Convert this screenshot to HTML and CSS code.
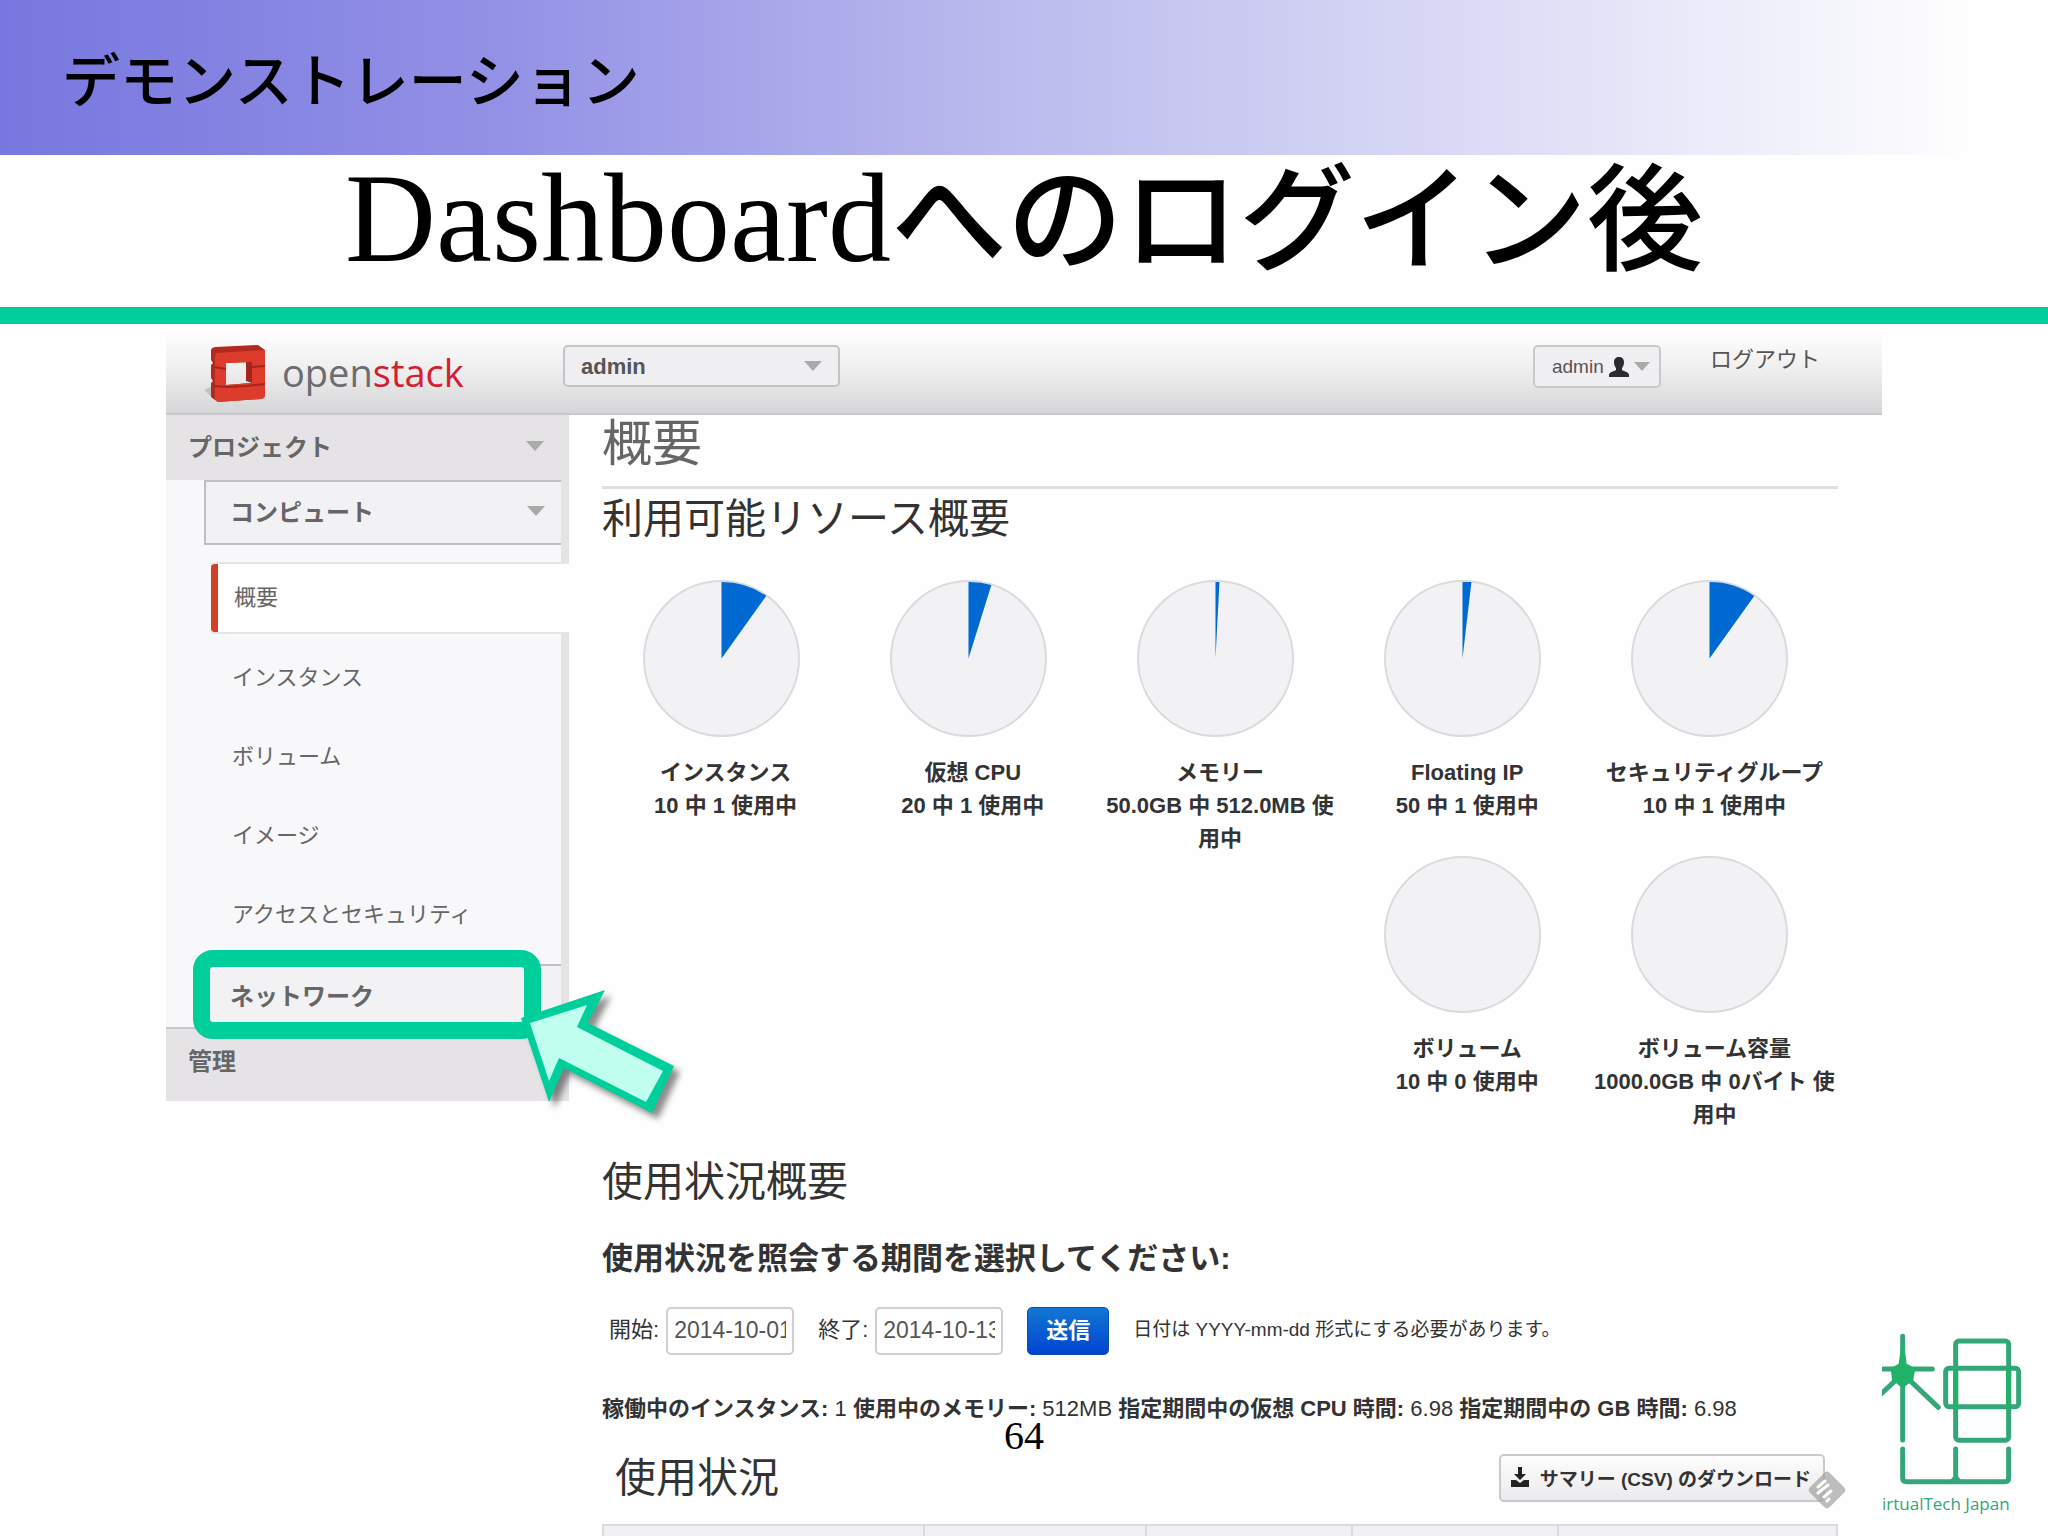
FILE: index.html
```html
<!DOCTYPE html>
<html lang="ja">
<head>
<meta charset="utf-8">
<title>Dashboardへのログイン後</title>
<link rel="stylesheet" href="styles.css">
</head>
<body>
<div class="slide">
  <header class="section-band">デモンストレーション</header>
  <h1 class="slide-title">Dashboard<span class="slide-title-ja">へのログイン後</span></h1>

  <div class="dashboard">
    <div class="topbar">
      <a class="brand" href="#">
        <svg class="brand-cube" viewBox="0 0 62 60" aria-hidden="true">
          <path d="M0 45 L8 41 L12 56 Z" fill="#c4c2c3"/>
          <path d="M7 5 Q8 2 12 2 L54 0 L61 5 V15 L58 17 L61 20 V51 Q60 54 56 54 L14 57 L7 52 V38 L9 36 L7 33 V20 L9 18 L7 15 Z M22 18 V40 L47 38 V17 Z" fill="#b02a20" fill-rule="evenodd"/>
          <path d="M12 8 L61 5 V51 Q60 54 56 54 L14 57 Q11 56 11 52 V12 Z M22 18 V40 L47 38 V17 Z" fill="#dd3b2b" fill-rule="evenodd"/>
          <path d="M42 17 L48 17 V38 L42 36 Z" fill="#a3261d"/>
          <path d="M10 22 L22 24 M48 22 L61 21 M10 41 L24 42 L42 41 L61 39" fill="none" stroke="#a3261d" stroke-width="2"/>
        </svg>
        <span class="brand-name">open<span class="brand-red">stack</span></span>
      </a>
      <div class="project-picker">
        <select class="project-select" aria-label="プロジェクト"><option>admin</option></select>
        <span class="caret"></span>
      </div>
      <button class="user-button" type="button">admin
        <svg class="user-icon" viewBox="0 0 20 22" aria-hidden="true"><path d="M10 1c3 0 5 2 5 5 0 3-1 5-2 6v2c1 1 7 2 7 5v2H0v-2c0-3 6-4 7-5v-2C6 11 5 9 5 6c0-3 2-5 5-5z" fill="#2c2c2e"/></svg>
        <span class="caret caret-small"></span>
      </button>
      <a class="logout" href="#">ログアウト</a>
    </div>

    <div class="columns">
      <nav class="sidebar">
        <a class="nav-head" href="#">プロジェクト<span class="caret"></span></a>
        <div class="nav-body">
          <a class="nav-sub" href="#">コンピュート<span class="caret"></span></a>
          <ul class="nav-list">
            <li><a class="nav-item nav-item-active" href="#">概要</a></li>
            <li><a class="nav-item" href="#">インスタンス</a></li>
            <li><a class="nav-item" href="#">ボリューム</a></li>
            <li><a class="nav-item" href="#">イメージ</a></li>
            <li><a class="nav-item" href="#">アクセスとセキュリティ</a></li>
          </ul>
          <div class="nav-marked">
            <a class="nav-sub nav-sub-plain" href="#">ネットワーク</a>
            <span class="marker"></span>
            <svg class="pointer" viewBox="515 980 180 150" aria-hidden="true">
              <path d="M521 1019 L605 991 L588 1024 L674 1067 L652 1114 L564 1069 L549 1103 Z" fill="#00cf9c"/>
              <path d="M530 1024 L587 1006 L577 1028 L663 1072 L646 1103 L559 1059 L549 1082 Z" fill="#c0fff0"/>
            </svg>
          </div>
        </div>
        <a class="nav-head nav-head-admin" href="#">管理</a>
      </nav>

      <main class="content">
        <h2 class="page-title">概要</h2>
        <h3 class="section-title">利用可能リソース概要</h3>
        <div class="quota-grid">
          <figure class="quota">
            <svg class="pie" viewBox="0 0 158 158" aria-hidden="true"><circle cx="79" cy="79" r="78"/><path d="M79 79V2A77 77 0 0 1 124 16Z"/></svg>
            <figcaption>インスタンス<br>10 中 1 使用中</figcaption>
          </figure>
          <figure class="quota">
            <svg class="pie" viewBox="0 0 158 158" aria-hidden="true"><circle cx="79" cy="79" r="78"/><path d="M79 79V2A77 77 0 0 1 102 5Z"/></svg>
            <figcaption>仮想 CPU<br>20 中 1 使用中</figcaption>
          </figure>
          <figure class="quota">
            <svg class="pie" viewBox="0 0 158 158" aria-hidden="true"><circle cx="79" cy="79" r="78"/><path d="M79 79V2H83Z"/></svg>
            <figcaption>メモリー<br>50.0GB 中 512.0MB 使<br>用中</figcaption>
          </figure>
          <figure class="quota">
            <svg class="pie" viewBox="0 0 158 158" aria-hidden="true"><circle cx="79" cy="79" r="78"/><path d="M79 79V2H88Z"/></svg>
            <figcaption>Floating IP<br>50 中 1 使用中</figcaption>
          </figure>
          <figure class="quota">
            <svg class="pie" viewBox="0 0 158 158" aria-hidden="true"><circle cx="79" cy="79" r="78"/><path d="M79 79V2A77 77 0 0 1 124 16Z"/></svg>
            <figcaption>セキュリティグループ<br>10 中 1 使用中</figcaption>
          </figure>
          <figure class="quota quota-volumes">
            <svg class="pie" viewBox="0 0 158 158" aria-hidden="true"><circle cx="79" cy="79" r="78"/></svg>
            <figcaption>ボリューム<br>10 中 0 使用中</figcaption>
          </figure>
          <figure class="quota">
            <svg class="pie" viewBox="0 0 158 158" aria-hidden="true"><circle cx="79" cy="79" r="78"/></svg>
            <figcaption>ボリューム容量<br>1000.0GB 中 0バイト 使<br>用中</figcaption>
          </figure>
        </div>

        <h3 class="section-title usage-title">使用状況概要</h3>
        <h4 class="period-title">使用状況を照会する期間を選択してください:</h4>
        <form class="period-form">
          <label for="start">開始:</label>
          <input id="start" class="date-input" type="text" value="2014-10-01">
          <label class="end-label" for="end">終了:</label>
          <input id="end" class="date-input" type="text" value="2014-10-13">
          <button class="submit" type="button">送信</button>
          <span class="hint">日付は YYYY-mm-dd 形式にする必要があります。</span>
        </form>
        <p class="stats"><b>稼働中のインスタンス:</b> 1 <b>使用中のメモリー:</b> 512MB <b>指定期間中の仮想 CPU 時間:</b> 6.98 <b>指定期間中の GB 時間:</b> 6.98</p>
        <div class="table-head">
          <h3 class="section-title">使用状況</h3>
          <button class="csv-button" type="button">
            <svg class="csv-icon" viewBox="0 0 20 22" aria-hidden="true"><path d="M8 1h4v7h4l-6 6-6-6h4zM1 14h5l4 3 4-3h5v7H1z" fill="#222"/></svg>
            サマリー (CSV) のダウンロード
            <svg class="stamp" viewBox="0 0 44 44" aria-hidden="true"><rect x="8" y="8" width="28" height="28" rx="4" transform="rotate(45 22 22)" fill="#999" fill-opacity=".65"/><path d="M13 19l7-6M13 25l10-8M19 29l7-6M22 33l2-2" stroke="#fff" stroke-width="3" stroke-linecap="round"/></svg>
          </button>
        </div>
        <table class="usage-table">
          <thead><tr><th class="col-a"></th><th class="col-b"></th><th class="col-c"></th><th class="col-c"></th><th></th></tr></thead>
        </table>
      </main>
    </div>
  </div>

  <span class="page-number">64</span>
  <div class="company">
    <svg class="company-mark" viewBox="66 30 426 480" fill="none" stroke="#33a777" stroke-width="15" stroke-linecap="round" stroke-linejoin="round" aria-hidden="true">
      <path d="M128 46V357M62 144H217M128 158L60 222M128 158L235 259"/>
      <path d="M122 85L134 85 140 128 166 142 160 176 136 196 120 196 96 176 92 142 116 128Z" fill="#1fb268" stroke="none"/>
      <rect x="287" y="60" width="159" height="298" rx="10"/>
      <rect x="257" y="142" width="219" height="115" rx="10"/>
      <path d="M287 150V250M446 150V250" stroke="#1fb268"/>
      <path d="M128 384V470Q128 482 140 482H434Q446 482 446 470V384M287 384V482"/>
      <path d="M266 482L287 458 308 482Z" fill="#33a777" stroke="none"/>
    </svg>
    <span class="company-name">irtualTech Japan</span>
  </div>
</div>
</body>
</html>
```
FILE: styles.css
```css
* {
  box-sizing: border-box;
}

body {
  margin: 0;
  background: #fefefe;
  color: #333;
  font-family: "Liberation Sans", "Noto Sans CJK JP", sans-serif;
  font-size: 22px;
}

h1, h2, h3, h4, p, ul, figure {
  margin: 0;
  padding: 0;
}

a {
  color: inherit;
  text-decoration: none;
}

button, input, select {
  font-family: inherit;
  color: inherit;
}

.slide {
  position: relative;
  min-height: 100vh;
}

.section-band {
  padding-left: 62px;
  background: linear-gradient(to right, #7777df 0%, #9492e6 25%, #bcbcee 50%, #dfdff7 75%, #fefefe 96%);
  color: #000;
  font-family: "Noto Sans CJK JP", sans-serif;
  font-size: 58px;
  font-weight: 500;
  line-height: 155px;
}

.slide-title {
  height: 169px;
  border-bottom: 17px solid #00cf9c;
  color: #000;
  font-family: "Liberation Serif", "Noto Sans CJK JP", serif;
  font-size: 126px;
  font-weight: 400;
  line-height: 127px;
  text-align: center;
}

.slide-title-ja {
  font-family: "Noto Sans CJK JP", sans-serif;
  font-size: 116px;
  font-weight: 500;
  line-height: 0;
}

.dashboard {
  margin: 8px 166px 0;
}

.caret {
  border: 9px solid transparent;
  border-top: 10px solid #aaa;
  border-bottom: 0;
}

.caret-small {
  border-width: 9px 8px 0;
}

/* top bar */
.topbar {
  display: flex;
  align-items: flex-start;
  height: 83px;
  padding: 13px 62px 0 38px;
  border-bottom: 2px solid #c9c8ca;
  background: linear-gradient(#fdfdfd, #f0eff0 45%, #d6d5d7);
}

.brand {
  display: flex;
  gap: 16px;
  width: 359px;
}

.brand-cube {
  width: 62px;
  height: 60px;
}

.brand-name {
  color: #6c6c70;
  font-family: "Open Sans", sans-serif;
  font-size: 38px;
  line-height: 54px;
}

.brand-red {
  color: #d3202f;
}

.project-picker {
  display: flex;
  align-items: center;
  justify-content: flex-end;
  width: 277px;
  height: 42px;
  padding-right: 16px;
  border: 2px solid #c4c3c6;
  border-radius: 5px;
  background: #efeef0;
}

.project-select {
  flex: 1;
  padding: 0 0 0 16px;
  border: 0;
  background: none;
  color: #555;
  font-size: 22px;
  font-weight: 700;
  appearance: none;
}

.user-button {
  display: flex;
  align-items: center;
  gap: 5px;
  width: 128px;
  height: 43px;
  margin-left: auto;
  padding: 0 0 0 17px;
  border: 2px solid #c9c8ca;
  border-radius: 5px;
  background: #f0eff1;
  color: #555;
  font-size: 19px;
}

.user-icon {
  width: 20px;
  height: 22px;
}

.logout {
  margin-left: 49px;
  color: #555;
  line-height: 30px;
}

/* side navigation */
.columns {
  display: flex;
  align-items: flex-start;
}

.sidebar {
  width: 403px;
  background: #f8f7fa;
  color: #666;
}

.nav-head {
  display: flex;
  align-items: center;
  justify-content: space-between;
  height: 65px;
  padding: 0 25px 4px 22px;
  background: #e5e3e6;
  font-size: 24px;
  font-weight: 700;
}

.nav-head-admin {
  height: 74px;
  padding-bottom: 12px;
  border-top: 2px solid #c9c8ca;
}

.nav-body {
  padding-left: 38px;
  border-right: 8px solid #e5e3e6;
}

.nav-sub {
  display: flex;
  align-items: center;
  justify-content: space-between;
  height: 65px;
  padding: 0 16px 4px 24px;
  border: 2px solid #bfbec1;
  border-right: 0;
  background: #f2f1f3;
  font-size: 24px;
  font-weight: 700;
}

.nav-sub-plain {
  height: 63px;
  border-left: 0;
  border-bottom: 0;
  padding-left: 26px;
}

.nav-list {
  padding: 19px 0 10px 7px;
  list-style: none;
}

.nav-item {
  display: block;
  padding-left: 21px;
  line-height: 79px;
}

.nav-item-active {
  margin: 0 -8px 6px 0;
  padding-left: 16px;
  border-left: 7px solid #cf4029;
  border-radius: 4px 0 0 4px;
  background: #fefefe;
  box-shadow: 0 0 0 2px #e5e3e6;
  clip-path: inset(-2px 0 -2px 0);
  line-height: 68px;
}

.nav-marked {
  position: relative;
}

.marker {
  position: absolute;
  top: -14px;
  left: -11px;
  width: 348px;
  height: 89px;
  border: 17px solid #00cf9c;
  border-radius: 20px;
}

.pointer {
  position: absolute;
  top: 15px;
  left: 311px;
  width: 180px;
  height: 150px;
  filter: drop-shadow(6px 6px 3px rgba(0, 0, 0, .45));
}

/* main content */
.content {
  flex: 1;
  min-width: 0;
  padding: 0 44px 0 33px;
}

.page-title {
  height: 74px;
  border-bottom: 3px solid #e0dde3;
  color: #666;
  font-size: 50px;
  font-weight: 400;
  line-height: 58px;
}

.section-title {
  font-size: 41px;
  font-weight: 400;
  line-height: 60px;
}

.quota-grid {
  display: grid;
  grid-template-columns: repeat(5, 1fr);
  margin-top: 31px;
}

.quota {
  display: flex;
  flex-direction: column;
  align-items: center;
  gap: 19px;
  height: 276px;
}

.quota-volumes {
  grid-column: 4;
}

.quota figcaption {
  font-weight: 700;
  line-height: 33px;
  text-align: center;
  white-space: nowrap;
}

.pie {
  width: 157px;
  height: 157px;
  margin-right: 9px;
}

.pie circle {
  fill: #f2f1f4;
  stroke: #dbd9dd;
  stroke-width: 2;
}

.pie path {
  fill: #0069d2;
}

.usage-title {
  margin-top: 20px;
}

.period-title {
  margin-top: 27px;
  font-size: 31px;
  line-height: 40px;
}

.period-form {
  display: flex;
  align-items: center;
  height: 48px;
  margin-top: 28px;
  padding-left: 7px;
}

.period-form label,
.hint {
  padding-bottom: 8px;
}

.date-input {
  width: 128px;
  height: 48px;
  margin-left: 7px;
  padding: 0 6px 2px;
  border: 2px solid #d0ced2;
  border-radius: 5px;
  background: #fefefe;
  color: #555;
  font-size: 23px;
}

.end-label {
  margin-left: 24px;
}

.submit {
  width: 82px;
  height: 48px;
  margin-left: 24px;
  padding: 0 0 6px;
  border: 1px solid #0a4fae;
  border-radius: 5px;
  background: linear-gradient(#1277d3, #0044d2);
  color: #fff;
  font-size: 22px;
  font-weight: 700;
}

.hint {
  margin-left: 24px;
  font-size: 19px;
  white-space: nowrap;
}

.stats {
  margin-top: 38px;
  line-height: 32px;
  white-space: nowrap;
}

.table-head {
  display: flex;
  align-items: center;
  justify-content: space-between;
  margin-top: 23px;
  padding: 0 13px;
}

.csv-button {
  position: relative;
  display: flex;
  align-items: center;
  gap: 10px;
  height: 48px;
  padding: 0 12px 2px 9px;
  border: 2px solid #cbc9cd;
  border-radius: 5px;
  background: linear-gradient(#fdfdfd, #ebeaec);
  font-size: 19px;
  font-weight: 700;
}

.csv-icon {
  width: 20px;
  height: 22px;
}

.stamp {
  position: absolute;
  right: -26px;
  bottom: -12px;
  width: 44px;
  height: 44px;
}

.usage-table {
  width: 100%;
  height: 12px;
  margin-top: 16px;
  border-collapse: collapse;
  table-layout: fixed;
  background: #f1f0f3;
}

.usage-table th {
  height: 12px;
  padding: 0;
  border: 2px solid #dcdade;
  border-bottom: 0;
}

.col-a {
  width: 26%;
}

.col-b {
  width: 18%;
}

.col-c {
  width: 16.7%;
}

/* slide footer */
.page-number {
  position: absolute;
  right: 0;
  bottom: 84px;
  left: 0;
  color: #000;
  font-family: "Liberation Serif", serif;
  font-size: 40px;
  line-height: 34px;
  text-align: center;
}

.company {
  position: absolute;
  right: 24px;
  bottom: 20px;
  display: flex;
  flex-direction: column;
  width: 142px;
}

.company-mark {
  width: 142px;
  height: 160px;
}

.company-name {
  color: #33a777;
  font-family: "Open Sans", sans-serif;
  font-size: 17px;
  line-height: 26px;
  white-space: nowrap;
}
```
